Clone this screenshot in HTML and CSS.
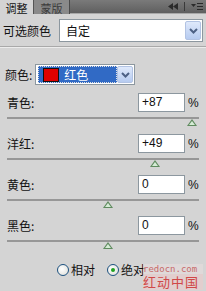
FILE: index.html
```html
<!DOCTYPE html>
<html>
<head>
<meta charset="utf-8">
<link rel="stylesheet" href="styles.css">
</head>
<body>
<div class="panel">
  <div class="tabs">
    <div class="tab active">调整</div>
    <div class="tab">蒙版</div>
    <div class="tools">
      <svg class="collapse" width="10" height="7" viewBox="0 0 10 7"><path d="M5 0 L0 3.5 L5 7 Z M10 0 L5 3.5 L10 7 Z" fill="#2a2a2a"/></svg>
      <span class="vsep"></span>
      <svg class="menu" width="12" height="8" viewBox="0 0 12 8"><path d="M0 1 L5 1 L2.5 4 Z" fill="#2a2a2a"/><rect x="6" y="0" width="6" height="1" fill="#2a2a2a"/><rect x="6" y="3" width="6" height="1" fill="#2a2a2a"/><rect x="6" y="6" width="6" height="1" fill="#2a2a2a"/></svg>
    </div>
  </div>

  <div class="preset">
    <span class="label">可选颜色</span>
    <div class="select wide">
      <span class="value">自定</span>
      <span class="btn"><svg width="9" height="6" viewBox="0 0 9 6"><path d="M1 1 L4.5 4.5 L8 1" fill="none" stroke="#4d6185" stroke-width="2"/></svg></span>
    </div>
  </div>
  <div class="sep"></div>

  <div class="colorrow">
    <span class="label">颜色:</span>
    <div class="select color">
      <span class="hl"><span class="swatch"></span><span class="ctext">红色</span></span>
      <span class="btn"><svg width="9" height="6" viewBox="0 0 9 6"><path d="M1 1 L4.5 4.5 L8 1" fill="none" stroke="#4d6185" stroke-width="2"/></svg></span>
    </div>
  </div>

  <div class="slider">
    <div class="srow"><span class="label">青色:</span><span class="input">+87</span><span class="pct">%</span></div>
    <div class="track"><span class="thumb" style="left:180px"></span></div>
  </div>
  <div class="slider">
    <div class="srow"><span class="label">洋红:</span><span class="input">+49</span><span class="pct">%</span></div>
    <div class="track"><span class="thumb" style="left:143px"></span></div>
  </div>
  <div class="slider">
    <div class="srow"><span class="label">黄色:</span><span class="input">0</span><span class="pct">%</span></div>
    <div class="track"><span class="thumb" style="left:96px"></span></div>
  </div>
  <div class="slider">
    <div class="srow"><span class="label">黑色:</span><span class="input">0</span><span class="pct">%</span></div>
    <div class="track"><span class="thumb" style="left:96px"></span></div>
  </div>

  <div class="radios">
    <span class="radio"><span class="circle"></span>相对</span>
    <span class="radio"><span class="circle on"></span>绝对</span>
  </div>

  <div class="watermark">
    <div class="wm1">redocn.com</div>
    <div class="wm2">红动中国</div>
  </div>
</div>
</body>
</html>
```

FILE: styles.css
```css
* { box-sizing: border-box; }
html, body { margin: 0; padding: 0; }
body {
  font-family: "Noto Sans CJK SC", "Liberation Sans", sans-serif;
  font-size: 12px;
  color: #111;
  background: #d4d4d4;
}
.panel {
  position: relative;
  width: 206px;
  height: 291px;
  overflow: hidden;
  background: #d4d4d4;
}
.tabs {
  height: 14px;
  display: flex;
  align-items: stretch;
  background: linear-gradient(#7a7a7a, #5f5f5f);
  border-bottom: 1px solid #a8a8a8;
}
.tab {
  width: 36px;
  height: 14px;
  padding-top: 2px;
  font-size: 11px;
  line-height: 12px;
  text-align: center;
  white-space: nowrap;
  color: #3a3a3a;
  background: #8a8a8a;
  border-right: 1px solid #4a4a4a;
}
.tab.active {
  width: 34px;
  background: #d4d4d4;
  color: #111;
  border-right: 1px solid #555;
}
.tools {
  margin-left: auto;
  display: flex;
  align-items: center;
  gap: 4px;
  padding-right: 3px;
}
.vsep { width: 1px; height: 9px; background: #3a3a3a; margin: 0 2px; }
.label { line-height: 14px; white-space: nowrap; flex-shrink: 0; }
.preset {
  display: flex;
  align-items: center;
  padding: 5px 3px 0 3px;
  gap: 8px;
}
.select {
  position: relative;
  display: flex;
  align-items: center;
  flex-shrink: 0;
  background: #fff;
  border: 1px solid #8c979f;
}
.select.wide { width: 144px; height: 23px; padding-left: 6px; }
.value { white-space: nowrap; line-height: 14px; }
.select .btn {
  position: absolute;
  right: 1px;
  top: 1px;
  bottom: 1px;
  width: 16px;
  display: flex;
  align-items: center;
  justify-content: center;
  background: linear-gradient(#dfe9fb, #b6cbf0);
  border: 1px solid #b2c3e3;
  border-radius: 2px;
}
.sep {
  margin-top: 4px;
  height: 2px;
  border-top: 1px solid #a9a9a9;
  border-bottom: 1px solid #ececec;
}
.colorrow {
  display: flex;
  align-items: center;
  padding: 16px 0 0 5px;
  gap: 3px;
}
.select.color { width: 100px; height: 21px; padding-left: 2px; }
.hl {
  display: flex;
  align-items: center;
  width: 79px;
  height: 17px;
  background: #316ac5;
  border: 1px dotted #e0e0e0;
  padding-left: 4px;
  gap: 5px;
  color: #fff;
}
.swatch {
  width: 16px;
  height: 14px;
  background: #e00000;
  border: 1px solid #111;
}
.ctext { line-height: 14px; white-space: nowrap; }
.slider { padding: 0 7px; }
.srow {
  display: flex;
  align-items: center;
  height: 19px;
  margin-top: 8px;
}
.slider + .slider .srow { margin-top: 15px; }
.srow .label { width: 131px; }
.input {
  width: 47px;
  height: 19px;
  background: #fff;
  border: 1px solid #8c979f;
  font-family: "Liberation Sans", sans-serif;
  font-size: 12px;
  line-height: 17px;
  padding-left: 3px;
}
.pct {
  font-family: "Liberation Sans", sans-serif;
  margin-left: 3px;
}
.track {
  position: relative;
  margin-top: 5px;
  height: 2px;
  background: #979797;
  width: 192px;
}
.thumb {
  position: absolute;
  top: 2px;
  width: 0;
  height: 0;
  border-left: 5px solid transparent;
  border-right: 5px solid transparent;
  border-bottom: 7px solid #5f8a5f;
}
.thumb::after {
  content: "";
  position: absolute;
  left: -3px;
  top: 2px;
  border-left: 3px solid transparent;
  border-right: 3px solid transparent;
  border-bottom: 4px solid #d6ecd6;
}
.radios {
  display: flex;
  gap: 12px;
  padding-left: 57px;
  margin-top: 21px;
}
.radio { display: flex; align-items: center; gap: 2px; line-height: 14px; white-space: nowrap; }
.circle {
  width: 12px;
  height: 12px;
  border-radius: 50%;
  border: 1px solid #1c5180;
  background: radial-gradient(circle at 40% 40%, #ffffff, #dcdcd6);
  position: relative;
}
.circle.on::after {
  content: "";
  position: absolute;
  left: 3px;
  top: 3px;
  width: 4px;
  height: 4px;
  border-radius: 50%;
  background: #21a121;
}
.watermark {
  position: absolute;
  left: 143px;
  top: 264px;
  width: 60px;
}
.wm1 {
  font-family: "DejaVu Sans Mono", monospace;
  font-size: 9px;
  line-height: 10px;
  color: #c86a6a;
  background: rgba(230, 220, 220, 0.6);
}
.wm2 {
  font-size: 13px;
  line-height: 16px;
  color: #d04848;
  letter-spacing: 1px;
  background: rgba(240, 200, 200, 0.5);
}
```
